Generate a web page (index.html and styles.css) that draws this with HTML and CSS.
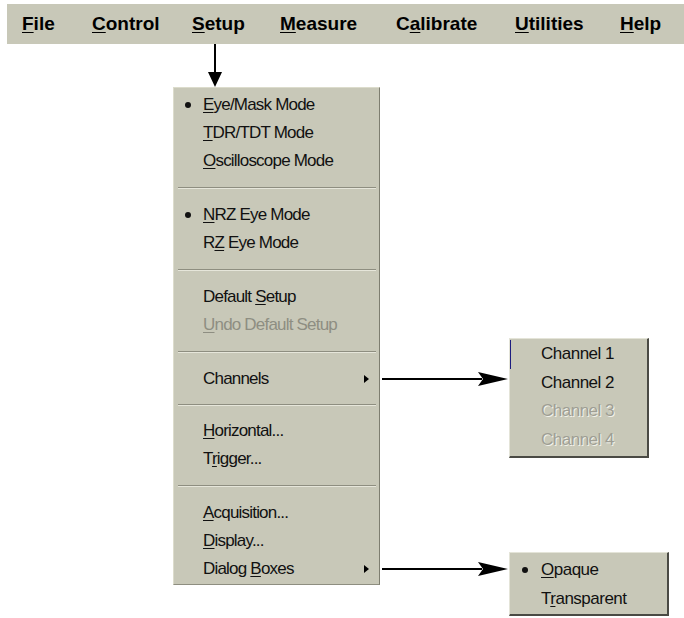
FILE: index.html
```html
<!DOCTYPE html>
<html lang="en">
<head>
  <meta charset="UTF-8" />
  <title>Setup Menu</title>
  <link rel="stylesheet" href="styles.css">
</head>
<body>
  <div class="menubar">
    <span class="bar-item"><u>F</u>ile</span>
    <span class="bar-item"><u>C</u>ontrol</span>
    <span class="bar-item"><u>S</u>etup</span>
    <span class="bar-item"><u>M</u>easure</span>
    <span class="bar-item">C<u>a</u>librate</span>
    <span class="bar-item"><u>U</u>tilities</span>
    <span class="bar-item"><u>H</u>elp</span>
  </div>

  <div class="drop">
    <svg width="16" height="43" viewBox="0 0 16 43">
      <rect x="7" y="0" width="2" height="30" fill="#000"/>
      <polygon points="1,28 15,28 8,43" fill="#000"/>
    </svg>
  </div>

  <div class="menu">
    <div class="item checked"><u>E</u>ye/Mask Mode</div>
    <div class="item"><u>T</u>DR/TDT Mode</div>
    <div class="item"><u>O</u>scilloscope Mode</div>
    <div class="sep"></div>
    <div class="item checked"><u>N</u>RZ Eye Mode</div>
    <div class="item">R<u>Z</u> Eye Mode</div>
    <div class="sep"></div>
    <div class="item">Default <u>S</u>etup</div>
    <div class="item disabled"><u>U</u>ndo Default Setup</div>
    <div class="sep"></div>
    <div class="item sub">Channels<span class="caret"></span>
      <div class="callout">
        <svg class="pointer" width="130" height="28" viewBox="0 0 130 28">
          <rect x="3" y="13" width="100" height="2" fill="#000"/>
          <polygon points="99,7 129,14 99,21 104,14" fill="#000"/>
        </svg>
        <div class="flyout channels">
          <div class="fly-item first">Channel 1</div>
          <div class="fly-item">Channel 2</div>
          <div class="fly-item off">Channel 3</div>
          <div class="fly-item off">Channel 4</div>
        </div>
      </div>
    </div>
    <div class="sep short"></div>
    <div class="item"><u>H</u>orizontal...</div>
    <div class="item">T<u>r</u>igger...</div>
    <div class="sep"></div>
    <div class="item"><u>A</u>cquisition...</div>
    <div class="item"><u>D</u>isplay...</div>
    <div class="item sub">Dialog <u>B</u>oxes<span class="caret"></span>
      <div class="callout">
        <svg class="pointer" width="130" height="28" viewBox="0 0 130 28">
          <rect x="3" y="13" width="100" height="2" fill="#000"/>
          <polygon points="99,7 129,14 99,21 104,14" fill="#000"/>
        </svg>
        <div class="flyout boxes">
          <div class="fly-item checked"><u>O</u>paque</div>
          <div class="fly-item">T<u>r</u>ansparent</div>
        </div>
      </div>
    </div>
  </div>
</body>
</html>
```

FILE: styles.css
```css
body {
  margin: 0;
  padding-bottom: 40px;
  background: #fff;
  font-family: "Liberation Sans", Arial, sans-serif;
  color: #111;
}
u {
  text-decoration: underline;
  text-underline-offset: 2px;
}

.menubar {
  margin: 4px 0 0 7px;
  height: 40px;
  background: #c8c8b8;
  display: grid;
  grid-template-columns: 70px 100px 88px 116px 119px 105px auto;
  align-items: center;
  padding-left: 15px;
  font-weight: bold;
  font-size: 19px;
  color: #000;
}

.drop {
  margin-left: 207px;
  height: 43px;
}
.drop svg {
  display: block;
}

.menu {
  margin-left: 173px;
  width: 207px;
  box-sizing: border-box;
  background: #c8c8b8;
  border-top: 1px solid #dcdccc;
  border-left: 1px solid #dcdccc;
  border-right: 1px solid #7e7e70;
  border-bottom: 1px solid #8e8e80;
  padding: 3px 0 1px;
  font-size: 17px;
  letter-spacing: -0.8px;
}
.item {
  position: relative;
  height: 28px;
  line-height: 28px;
  padding-left: 29px;
}
.item.checked::before,
.fly-item.checked::before {
  content: "";
  position: absolute;
  left: 11px;
  top: 11px;
  width: 6px;
  height: 6px;
  border-radius: 50%;
  background: #111;
}
.item.disabled {
  color: #8e8e82;
}
.sep {
  height: 26px;
  display: flex;
  align-items: center;
  padding: 0 3px 0 4px;
}
.sep.short {
  height: 24px;
}
.sep::after {
  content: "";
  flex: 1;
  height: 0;
  border-top: 1px solid #8e8e80;
  border-bottom: 1px solid #e6e6da;
}
.caret {
  position: absolute;
  right: 10px;
  top: 10px;
  border-left: 5px solid #000;
  border-top: 4px solid transparent;
  border-bottom: 4px solid transparent;
}

.callout {
  position: absolute;
  left: 100%;
  top: 0;
  display: flex;
  align-items: flex-start;
  letter-spacing: -0.5px;
}
.pointer {
  display: block;
  flex: none;
}
.flyout {
  position: relative;
  flex: none;
  box-sizing: border-box;
  background: #c8c8b8;
  border-top: 1px solid #e4e4d8;
  border-left: 1px solid #e4e4d8;
  border-right: 2px solid #4a4a44;
  border-bottom: 2px solid #4a4a44;
}
.flyout.channels {
  width: 140px;
  height: 120px;
  margin-top: -27px;
  padding-top: 1px;
}
.flyout.boxes {
  width: 160px;
  height: 64px;
  margin-top: -3px;
  padding-top: 3px;
}
.fly-item {
  position: relative;
  height: 28.5px;
  line-height: 28px;
  padding-left: 31px;
}
.fly-item.first {
  box-shadow: inset 1px 0 0 #1c1c80;
}
.fly-item.checked::before {
  left: 12px;
}
.fly-item.off {
  color: #9e9e94;
  text-shadow: 1px 1px 0 #f2f2ea;
}
```
